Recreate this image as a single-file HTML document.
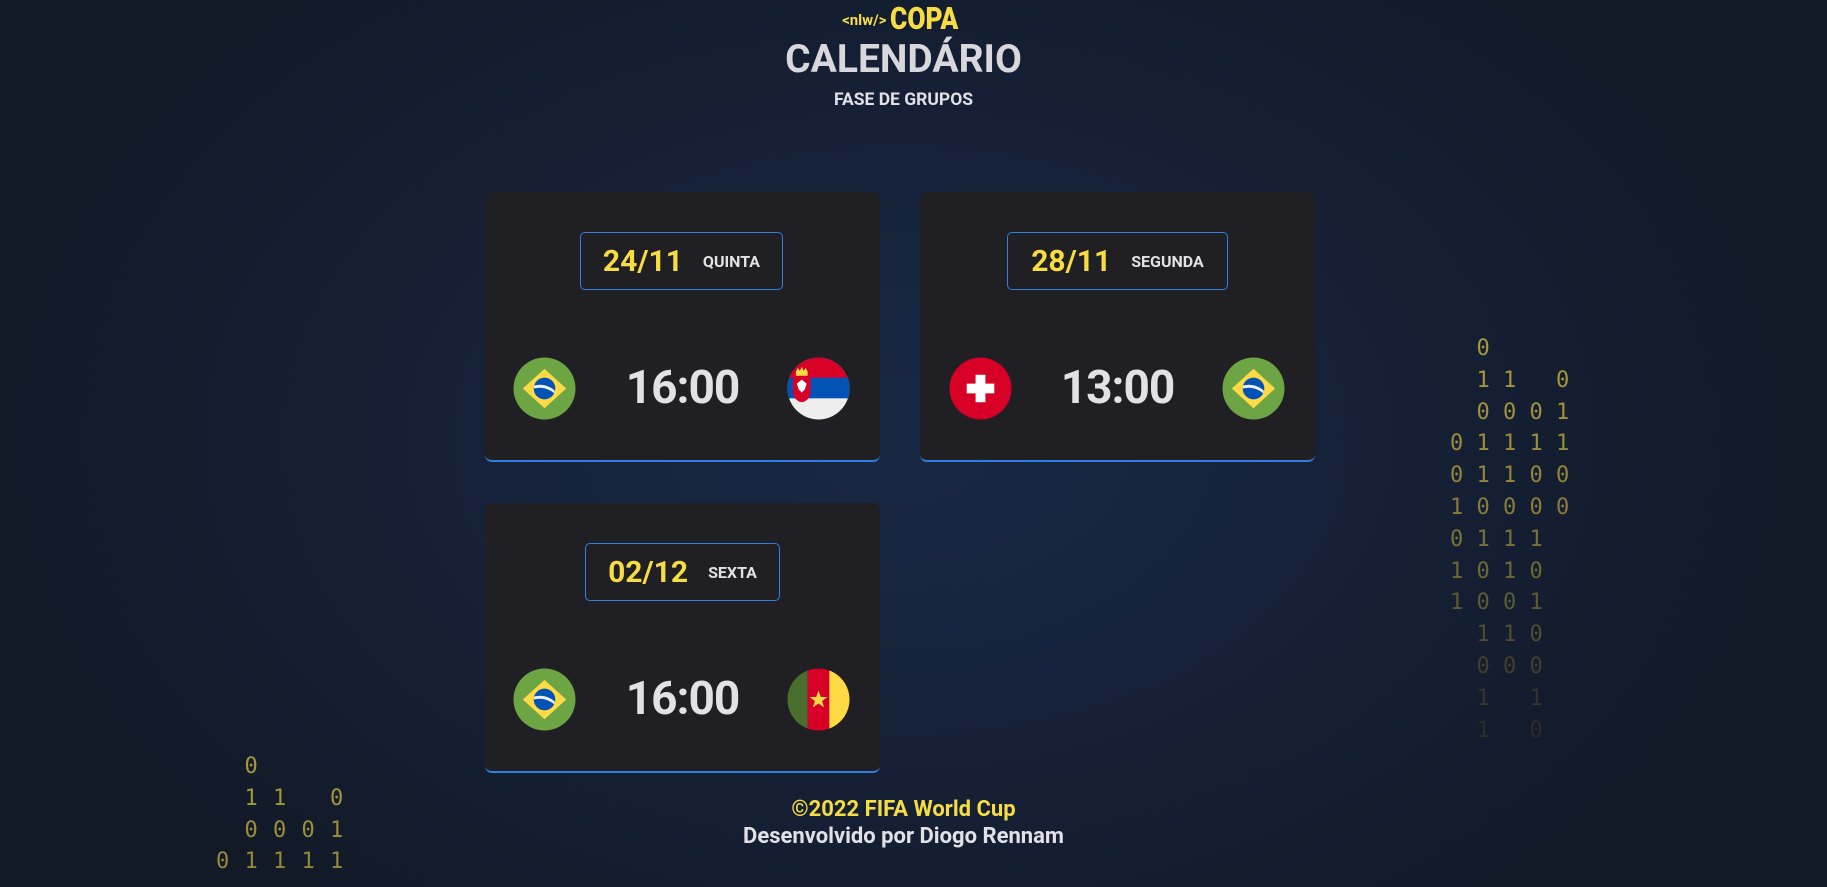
<!DOCTYPE html>
<html><head><meta charset="utf-8"><style>
*{margin:0;padding:0;box-sizing:border-box}
body{width:1827px;height:887px;overflow:hidden;position:relative;font-family:"Roboto","Liberation Sans",sans-serif;color:#e1e1e6;
background:radial-gradient(ellipse 900px 600px at 900px 440px,#182844 0%,#16223a 45%,#121a28 100%);}
.c{position:absolute;left:-10px;width:1827px;text-align:center;font-weight:bold}
.card{position:absolute;width:395px;height:270px;background:#202024;border-radius:7px;border-bottom:2px solid #2f7fe0}
.date{position:absolute;left:97px;top:40px;height:58px;border:1px solid #2f7fe0;border-radius:5px;display:flex;align-items:center;justify-content:center;padding:0 20px;gap:20px}
.date b{color:#f7dd43;font-size:30px}
.date span{font-size:16px;font-weight:bold;color:#e1e1e6}
.time{position:absolute;left:0;width:395px;top:165px;text-align:center;font-size:46px;font-weight:bold;color:#e1e1e6;line-height:62px;letter-spacing:-1px}
.flag{position:absolute;top:165px;width:63px;height:63px}
pre{position:absolute;font-family:"DejaVu Sans Mono",monospace;font-size:22px;line-height:31.8px}
</style></head><body>
<div class="c" style="top:0px;color:#f7dd43"><span style="font-size:15px;vertical-align:4px">&lt;nlw/&gt;</span><span style="display:inline-block;font-size:31px;font-weight:900;transform:scaleX(0.85);margin-left:-2px">COPA</span></div>
<div class="c" style="top:36px;font-size:39px;color:#d8d8dc">CALENDÁRIO</div>
<div class="c" style="top:90px;font-size:17.5px">FASE DE GRUPOS</div>

<svg width="0" height="0" style="position:absolute"><defs>
<g id="br"><circle cx="32" cy="32" r="31.5" fill="#6da544"/><polygon points="32,12 54,32 32,52 10,32" fill="#ffda44"/><circle cx="32" cy="32" r="11" fill="#0052b4"/><path d="M21.5,29 Q33,26 42.5,34 L42,37 Q33,29 21,32Z" fill="#eee"/></g>
<g id="rs"><clipPath id="cp"><circle cx="32" cy="32" r="31.5"/></clipPath><g clip-path="url(#cp)"><rect width="64" height="64" fill="#eee"/><rect width="64" height="42" fill="#0052b4"/><rect width="64" height="21" fill="#d80027"/><path d="M6,20 h18 v14 q0,10 -9,12 q-9,-2 -9,-12z" fill="#d80027"/><path d="M9,15 h12 v4 h-12z M9,15 l2,-4 2,3 2,-4 2,4 2,-3 2,4z" fill="#ffda44"/><path d="M10,27 l5,-4 5,4 -2,6 -3,3 -3,-3z" fill="#fff"/></g></g>
<g id="ch"><circle cx="32" cy="32" r="31.5" fill="#d80027"/><path d="M27,18h10v9h9v10h-9v9h-10v-9h-9v-10h9z" fill="#fff"/></g>
<g id="cm"><clipPath id="cp2"><circle cx="32" cy="32" r="31.5"/></clipPath><g clip-path="url(#cp2)"><rect width="21" height="64" fill="#496e2d"/><rect x="21" width="22" height="64" fill="#d80027"/><rect x="43" width="21" height="64" fill="#ffda44"/><polygon points="32,23 34.4,29.5 41,29.5 35.7,33.5 37.6,40 32,36 26.4,40 28.3,33.5 23,29.5 29.6,29.5" fill="#ffda44"/></g></g>
</defs></svg>

<div class="card" style="left:485px;top:192px">
 <div class="date" style="left:95px;width:203px"><b>24/11</b><span>QUINTA</span></div>
 <svg class="flag" style="left:28px" viewBox="0 0 64 64"><use href="#br"/></svg>
 <div class="time">16:00</div>
 <svg class="flag" style="left:302px" viewBox="0 0 64 64"><use href="#rs"/></svg>
</div>
<div class="card" style="left:920px;top:192px">
 <div class="date" style="left:87px;width:221px"><b>28/11</b><span>SEGUNDA</span></div>
 <svg class="flag" style="left:29px" viewBox="0 0 64 64"><use href="#ch"/></svg>
 <div class="time">13:00</div>
 <svg class="flag" style="left:302px" viewBox="0 0 64 64"><use href="#br"/></svg>
</div>
<div class="card" style="left:485px;top:503px">
 <div class="date" style="left:100px;width:195px"><b>02/12</b><span>SEXTA</span></div>
 <svg class="flag" style="left:28px" viewBox="0 0 64 64"><use href="#br"/></svg>
 <div class="time">16:00</div>
 <svg class="flag" style="left:302px" viewBox="0 0 64 64"><use href="#cm"/></svg>
</div>

<pre style="left:1450px;top:333px"><span style="color:#a8983a">  0</span>
<span style="color:#a4963a">  1 1   0</span>
<span style="color:#a0923a">  0 0 0 1</span>
<span style="color:#9a8d3a">0 1 1 1 1</span>
<span style="color:#918639">0 1 1 0 0</span>
<span style="color:#877d38">1 0 0 0 0</span>
<span style="color:#7a7236">0 1 1 1</span>
<span style="color:#6d6734">1 0 1 0</span>
<span style="color:#5f5a32">1 0 0 1</span>
<span style="color:#4f4c30">  1 1 0</span>
<span style="color:#413f2d">  0 0 0</span>
<span style="color:#35352b">  1   1</span>
<span style="color:#2c2d29">  1   0</span></pre>
<pre style="left:216px;top:751px;letter-spacing:1px;color:#a8983a"><span>  0</span>
<span style="color:#a3953a">  1 1   0</span>
<span style="color:#9c8f3a">  0 0 0 1</span>
<span style="color:#948839">0 1 1 1 1</span></pre>

<div class="c" style="top:797px;font-size:22px;color:#f7dd43">©2022 FIFA World Cup</div>
<div class="c" style="top:824px;font-size:22px;color:#e1e1e6">Desenvolvido por Diogo Rennam</div>
</body></html>
